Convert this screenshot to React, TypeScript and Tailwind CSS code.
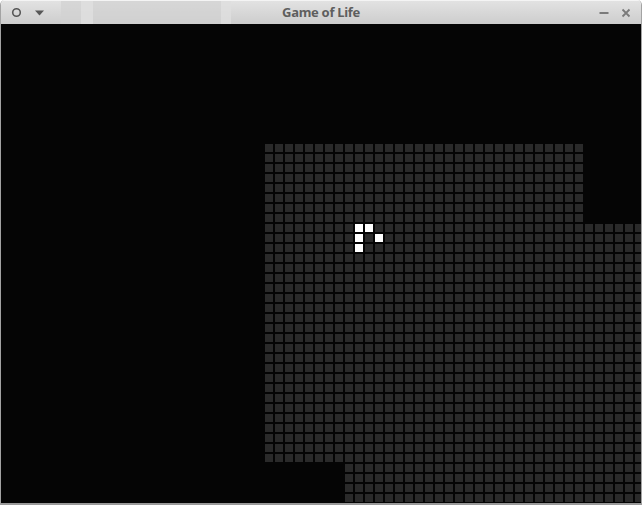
import React from "react";

const COLS = 64;
const ROWS = 48;

const WHITE = new Set(["20,35", "20,36", "21,35", "21,37", "22,35"]);

function cellState(r: number, c: number): 0 | 1 | 2 {
  if (WHITE.has(`${r},${c}`)) return 2;
  if (r >= 12 && r <= 19 && c >= 26 && c <= 57) return 1;
  if (r >= 20 && r <= 43 && c >= 26) return 1;
  if (r >= 44 && c >= 34) return 1;
  return 0;
}

export default function App() {
  const cells: React.ReactNode[] = [];
  for (let r = 0; r < ROWS; r++) {
    for (let c = 0; c < COLS; c++) {
      const s = cellState(r, c);
      cells.push(
        <div
          key={`${r}-${c}`}
          className={
            s === 2
              ? "w-[8px] h-[8px] bg-white"
              : s === 1
              ? "w-[8px] h-[8px] bg-[#2a2a2a]"
              : "w-[8px] h-[8px]"
          }
        />
      );
    }
  }
  return (
    <div className="w-[642px] h-[505px] bg-white overflow-hidden">
      <div className="w-full h-full flex flex-col rounded-t-[5px] overflow-hidden border-x border-b border-[#a3a3a3] border-b-2 border-b-[#9a9a9a]">
        <div className="relative h-[24px] shrink-0 flex items-center bg-gradient-to-b from-[#e2e2e2] to-[#cdcdcd] border-t border-t-[#f4f4f4]">
          <div className="absolute left-[60px] top-0 h-full w-[160px] bg-[#d2d2d2] opacity-70" />
          <div className="absolute left-[80px] top-0 h-full w-[12px] bg-[#e0e0e0] opacity-80" />
          <div className="absolute left-[220px] top-0 h-full w-[10px] bg-[#dedede] opacity-80" />
          <div className="relative flex items-center gap-[13px] pl-[10px]">
            <svg width="11" height="11" viewBox="0 0 11 11">
              <circle cx="5.5" cy="5.5" r="3.8" fill="none" stroke="#575757" strokeWidth="1.6" />
            </svg>
            <svg width="9" height="6" viewBox="0 0 9 6">
              <polygon points="0,0.5 9,0.5 4.5,5.5" fill="#575757" />
            </svg>
          </div>
          <div
            className="absolute inset-0 flex items-center justify-center text-[13px] font-bold text-[#5e5e5e]"
            style={{ fontFamily: "'Noto Sans', 'Liberation Sans', sans-serif" }}
          >
            <span className="tracking-[-0.3px]">Game of Life</span>
          </div>
          <div className="relative ml-auto flex items-center gap-[12px] pr-[10px]">
            <svg width="10" height="10" viewBox="0 0 10 10">
              <rect x="0.5" y="4" width="9" height="2" fill="#7a7a7a" />
            </svg>
            <svg width="10" height="10" viewBox="0 0 10 10">
              <path d="M1.5 1.5 L8.5 8.5 M8.5 1.5 L1.5 8.5" stroke="#7a7a7a" strokeWidth="1.8" />
            </svg>
          </div>
        </div>
        <div className="flex-1 bg-[#050505] overflow-hidden pl-[4px]">
          <div className="grid grid-cols-[repeat(64,8px)] gap-[2px]">{cells}</div>
        </div>
      </div>
    </div>
  );
}
